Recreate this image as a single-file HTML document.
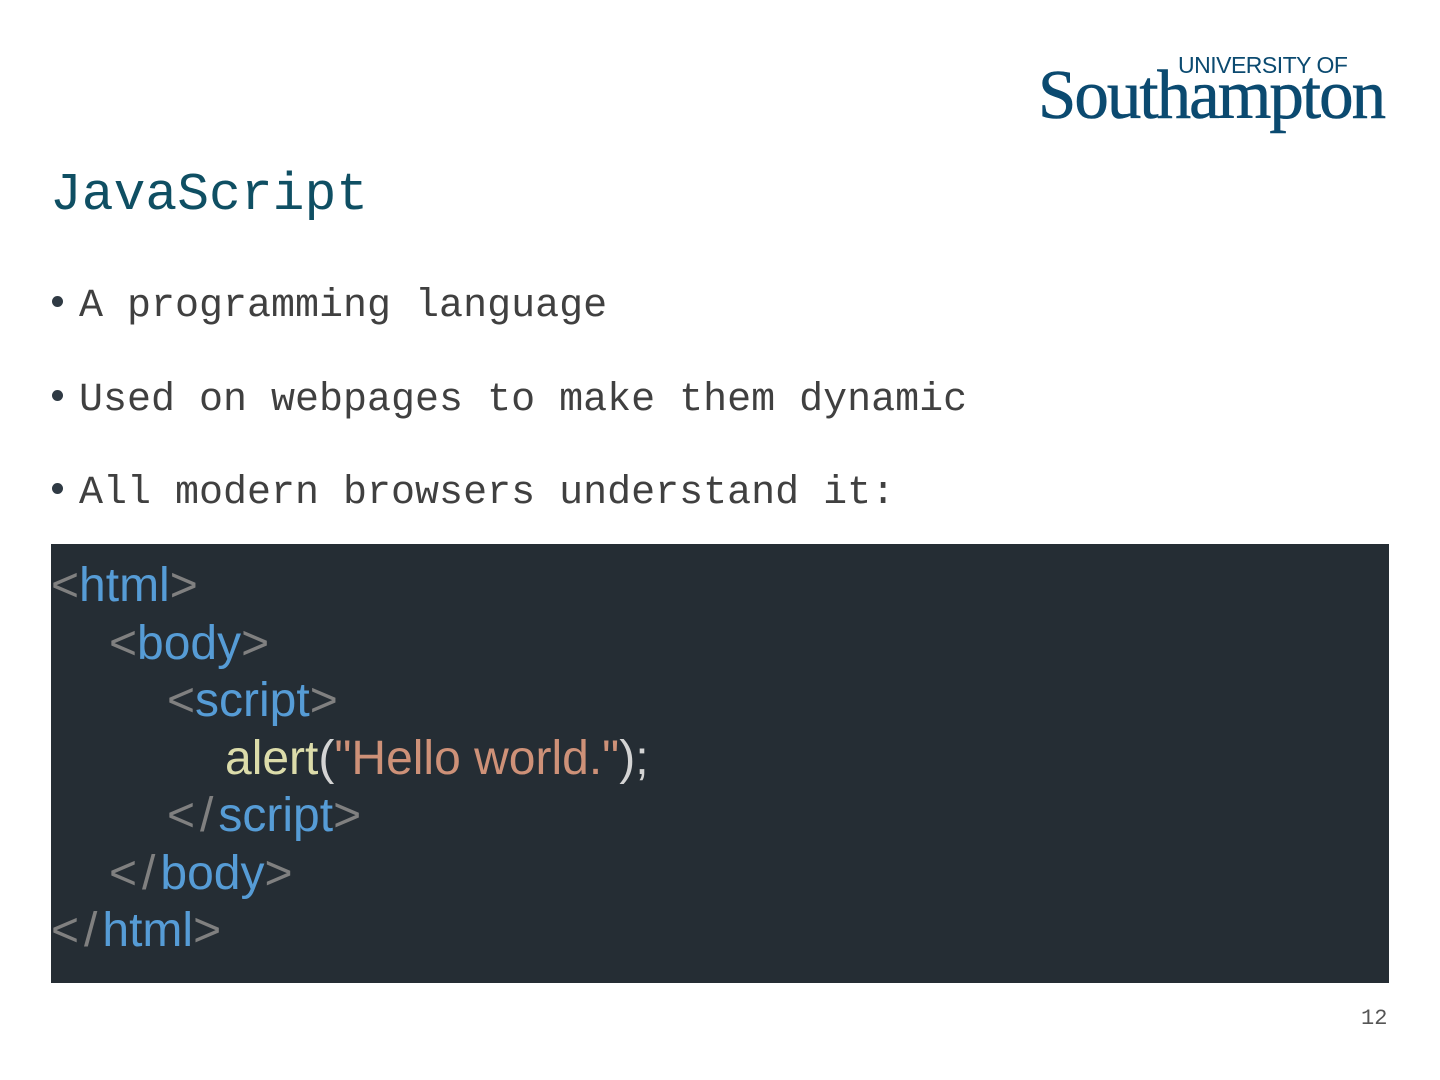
<!DOCTYPE html>
<html><head><meta charset="utf-8"><style>
body{margin:0;width:1440px;height:1080px;background:#fff;position:relative;overflow:hidden}
.a{position:absolute;white-space:pre}
.m{font-family:"Liberation Mono","Noto Sans CJK SC",monospace}
.t{font-size:53px;line-height:53px;color:#0f4f63;left:50px;top:169px}
.b{font-size:40px;line-height:40px;color:#404040;left:79px}
.dot{position:absolute;left:52px;width:11px;height:11px;border-radius:50%;background:#2f3a44}
.code{position:absolute;left:51px;top:544px;width:1338px;height:439px;background:#252d34}
.code div{position:absolute;left:0;font-family:"Liberation Sans",sans-serif;font-size:48px;line-height:57.5px;white-space:pre;color:#d4d4d4}
.g{color:#808080}.k{color:#569cd6}.f{color:#dcdcaa}.s{color:#ce9178}
.sl{margin:0 5px}
</style></head><body>
<div class="a" style="left:1038px;top:54px;font-family:'Liberation Serif',serif;font-size:70px;line-height:84px;color:#0b4a70;letter-spacing:-2px;-webkit-text-stroke:0.6px #0b4a70;transform:scaleX(0.985);transform-origin:left">Southampton</div>
<div class="a" style="left:1176px;top:53px;font-family:'Liberation Sans',sans-serif;font-size:23px;color:#0b4a70;letter-spacing:-0.5px;background:#fff;padding:0 2px;line-height:24px">UNIVERSITY OF</div>
<div class="a m t">JavaScript</div>
<div class="dot" style="top:296px"></div><div class="a m b" style="top:287px">A programming language</div>
<div class="dot" style="top:390px"></div><div class="a m b" style="top:381px">Used on webpages to make them dynamic</div>
<div class="dot" style="top:483px"></div><div class="a m b" style="top:474px">All modern browsers understand it:</div>
<div class="code">
<div style="top:13px"><span class="g">&lt;</span><span class="k">html</span><span class="g">&gt;</span></div>
<div style="top:70.5px;left:58px"><span class="g">&lt;</span><span class="k">body</span><span class="g">&gt;</span></div>
<div style="top:128px;left:116px"><span class="g">&lt;</span><span class="k">script</span><span class="g">&gt;</span></div>
<div style="top:185.5px;left:174px"><span class="f">alert</span>(<span class="s">"Hello world."</span>);</div>
<div style="top:243px;left:116px"><span class="g">&lt;<span class="sl">/</span></span><span class="k">script</span><span class="g">&gt;</span></div>
<div style="top:300.5px;left:58px"><span class="g">&lt;<span class="sl">/</span></span><span class="k">body</span><span class="g">&gt;</span></div>
<div style="top:358px"><span class="g">&lt;<span class="sl">/</span></span><span class="k">html</span><span class="g">&gt;</span></div>
</div>
<div class="a m" style="left:1361px;top:1008px;font-size:22px;line-height:22px;color:#555">12</div>
</body></html>
